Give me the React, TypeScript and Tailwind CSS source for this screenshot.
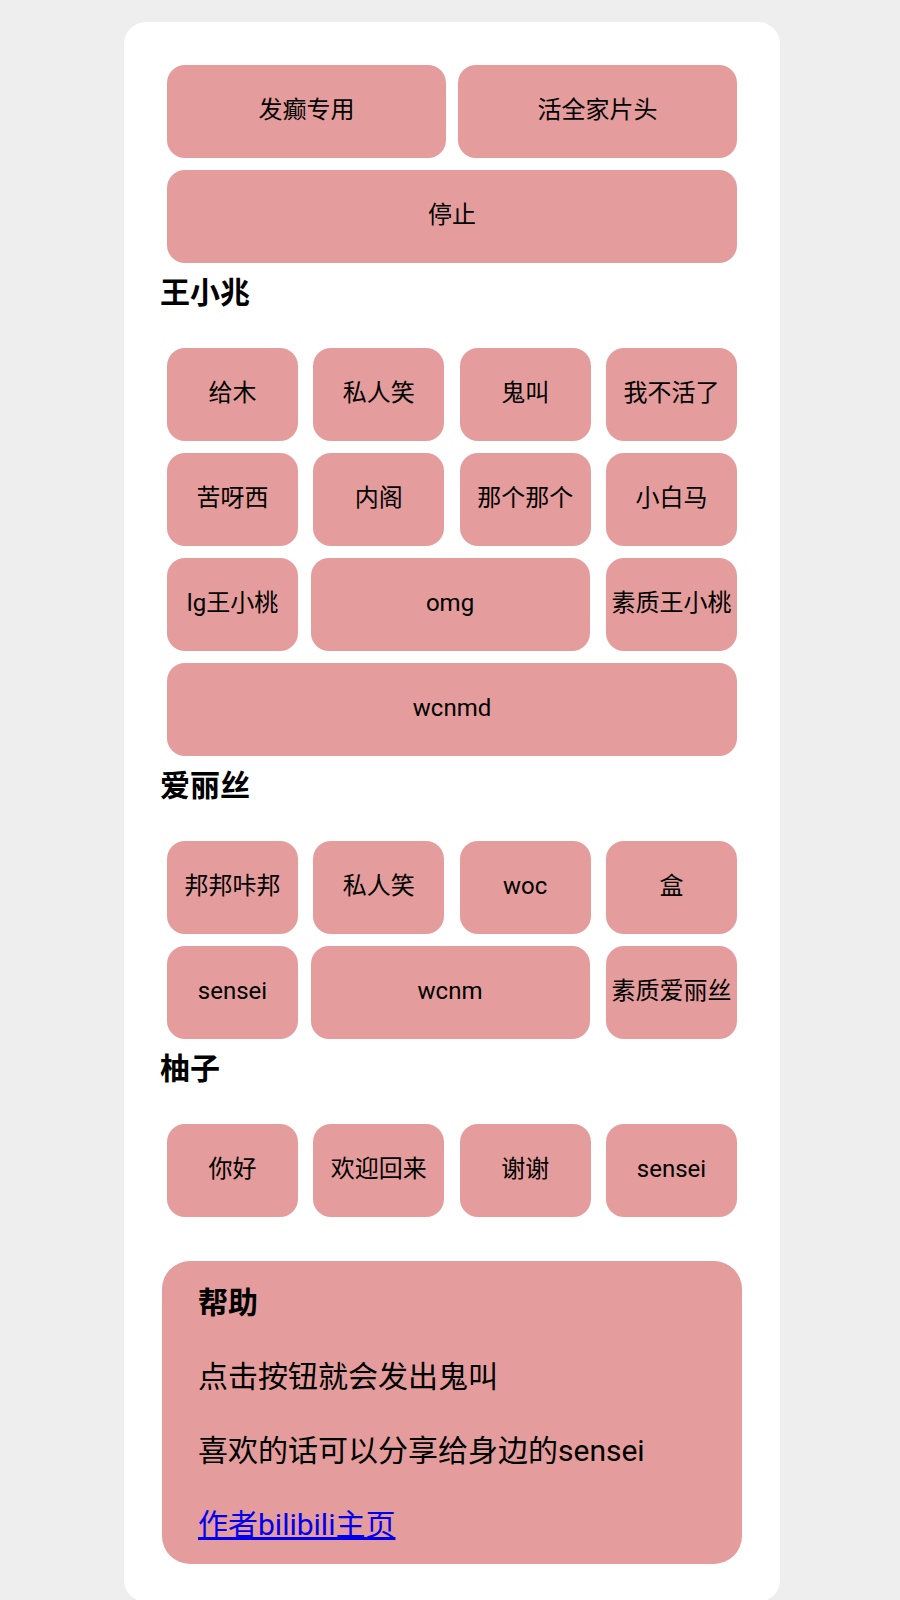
import React from 'react'

type Btn = { label: string; size?: 'sm' | 'md' | 'lg' | 'mid' }

const top: Btn[][] = [
  [
    { label: '发癫专用', size: 'md' },
    { label: '活全家片头', size: 'md' },
  ],
  [{ label: '停止', size: 'lg' }],
]

const sections: { title: string; rows: Btn[][] }[] = [
  {
    title: '王小兆',
    rows: [
      [{ label: '给木' }, { label: '私人笑' }, { label: '鬼叫' }, { label: '我不活了' }],
      [{ label: '苦呀西' }, { label: '内阁' }, { label: '那个那个' }, { label: '小白马' }],
      [{ label: 'lg王小桃' }, { label: 'omg', size: 'mid' }, { label: '素质王小桃' }],
      [{ label: 'wcnmd', size: 'lg' }],
    ],
  },
  {
    title: '爱丽丝',
    rows: [
      [{ label: '邦邦咔邦' }, { label: '私人笑' }, { label: 'woc' }, { label: '盒' }],
      [{ label: 'sensei' }, { label: 'wcnm', size: 'mid' }, { label: '素质爱丽丝' }],
    ],
  },
  {
    title: '柚子',
    rows: [[{ label: '你好' }, { label: '欢迎回来' }, { label: '谢谢' }, { label: 'sensei' }]],
  },
]

const widths = {
  sm: 'w-[131px]',
  md: 'w-[279px]',
  // middle wide button in a 3-item row sits a little left of centre
  mid: 'w-[279px] mr-[4px]',
  lg: 'w-full',
}

function SoundButton({ label, size = 'sm' }: Btn) {
  return (
    <button
      className={`${widths[size]} h-[93px] shrink-0 rounded-[18px] bg-[#e59c9c] pb-[4px] text-[24px] text-black flex items-center justify-center whitespace-nowrap`}
    >
      {label}
    </button>
  )
}

function ButtonGroup({ rows }: { rows: Btn[][] }) {
  return (
    <div className="flex flex-col gap-[12px] px-[5px]">
      {rows.map((row, i) => (
        <div key={i} className="flex justify-between">
          {row.map((b, j) => (
            <SoundButton key={j} {...b} />
          ))}
        </div>
      ))}
    </div>
  )
}

export default function App() {
  return (
    <div
      className="min-h-screen bg-[#eeeeee] pt-[22px]"
      style={{ fontFamily: 'Roboto, "Noto Sans CJK SC", sans-serif' }}
    >
      <div className="ml-[124px] w-[656px] bg-white rounded-[22px] px-[38px] pt-[43px] pb-[38px]">
        <ButtonGroup rows={top} />
        {sections.map((s) => (
          <section key={s.title}>
            <h2 className="mt-[7px] mb-[33px] -ml-[2px] text-[30px] leading-[45px] font-bold text-black">
              {s.title}
            </h2>
            <ButtonGroup rows={s.rows} />
          </section>
        ))}

        <div className="mt-[44px] rounded-[28px] bg-[#e59c9c] pl-[36px] pr-[20px] pt-[19px] pb-[17px] flex flex-col gap-[29px] text-[30px] leading-[45px] text-black">
          <h3 className="font-bold">帮助</h3>
          <p>点击按钮就会发出鬼叫</p>
          <p>喜欢的话可以分享给身边的sensei</p>
          <p>
            <a href="#" className="text-[#0000ee] underline">
              作者bilibili主页
            </a>
          </p>
        </div>
      </div>
    </div>
  )
}
